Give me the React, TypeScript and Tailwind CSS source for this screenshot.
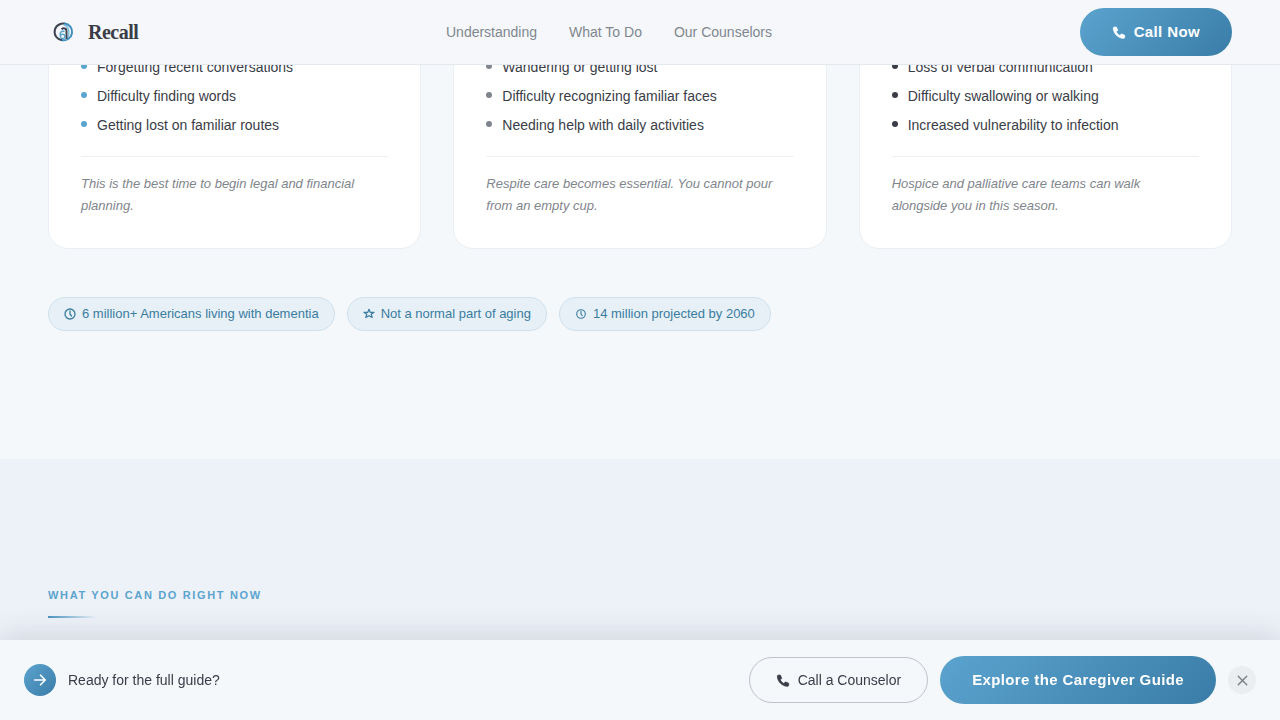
import { X } from "lucide-react";

const navLinks = [
  { label: "Understanding", href: "#understanding" },
  { label: "What To Do", href: "#what-to-do" },
  { label: "Our Counselors", href: "#counselors" },
];

const stages = [
  {
    id: "early",
    dot: "bg-[#5ba4cf]",
    signs: ["Forgetting recent conversations", "Difficulty finding words", "Getting lost on familiar routes"],
    note: "This is the best time to begin legal and financial planning.",
  },
  {
    id: "middle",
    dot: "bg-[#7f858c]",
    signs: ["Wandering or getting lost", "Difficulty recognizing familiar faces", "Needing help with daily activities"],
    note: "Respite care becomes essential. You cannot pour from an empty cup.",
  },
  {
    id: "late",
    dot: "bg-[#3a3d47]",
    signs: ["Loss of verbal communication", "Difficulty swallowing or walking", "Increased vulnerability to infection"],
    note: "Hospice and palliative care teams can walk alongside you in this season.",
  },
];

const Logo = () => (
  <svg width="32" height="32" viewBox="0 0 32 32" fill="none" aria-hidden="true">
    <path d="M14.500 24.200A8.300 8.300 0 1 1 19 8.700" stroke="#3d4350" strokeWidth="2" />
    <path d="M16.500 7.400A8.500 8.500 0 1 1 14 24.200" stroke="#3f8fbe" strokeWidth="2" />
    <path d="M15.500 8.500C21.500 10.500 23 19.500 17.500 23.800" stroke="#7dbbdc" strokeWidth="1.400" />
    <path d="M13.500 13.200c2-1.500 5-1 5 1.500v8.300" stroke="#3d4350" strokeWidth="2" />
    <path d="M16.500 15.500c-3.500-.7-4.500 1-4.300 4 .2 2.400 1.500 3.300 3.300 2.900 1.600-.4 1.800-2.700.5-3.700-1.200-.7-2.500-.4-3.500.5" stroke="#5ba4cf" strokeWidth="1.500" />
  </svg>
);

const PhoneIcon = () => (
  <svg width="14" height="14" viewBox="1 0 22 22" fill="currentColor" stroke="currentColor" strokeWidth="1" strokeLinejoin="round" aria-hidden="true">
    <path d="M4 3.500L6.800 3c.6-.1 1.100.2 1.300.7l1.800 4c.2.500.1 1-.3 1.400L7.600 10.800c1.300 2.500 3.200 4.400 5.700 5.700l1.800-2c.3-.4.900-.5 1.400-.3l4 1.700c.5.200.8.8.7 1.300l-.6 2.800c-.1.600-.6 1-1.200 1C10.700 21 3 13.300 3 4.700c0-.600.400-1.100 1-1.200z" />
  </svg>
);

const ClockIcon = ({ small = false }: { small?: boolean }) => (
  <svg
    width="12"
    height="12"
    viewBox={small ? "-1 -1 14 14" : "0 0 12 12"}
    fill="none"
    stroke="currentColor"
    strokeWidth="1.300"
    strokeLinecap="round"
    aria-hidden="true"
  >
    <circle cx="6" cy="6" r="5" />
    <path d="M6 3v3l1.500 2" />
  </svg>
);

const StarIcon = () => (
  <svg width="12" height="12" viewBox="0 0 12 12" fill="none" stroke="currentColor" strokeWidth="1.200" strokeLinejoin="round" aria-hidden="true">
    <path d="M6 1.300l1.200 3h3.900L8.200 6.300l1 3.200L6 7.700 2.800 9.500l1-3.200L.9 4.300h3.900L6 1.300z" />
  </svg>
);

const facts = [
  { icon: <ClockIcon />, text: "6 million+ Americans living with dementia" },
  { icon: <StarIcon />, text: "Not a normal part of aging" },
  { icon: <ClockIcon small />, text: "14 million projected by 2060" },
];

const Header = () => (
  <header className="fixed inset-x-0 top-0 z-20 border-b border-[#e3e8ee] bg-[#f5f7fb]">
    <div className="flex h-16 items-center justify-between px-12">
      <a href="#top" className="flex items-center gap-2">
        <Logo />
        <span className="font-['Liberation_Serif',serif] text-xl font-bold tracking-tight">Recall</span>
      </a>
      <nav className="flex gap-8 text-sm text-[#7f888f]">
        {navLinks.map((link) => (
          <a key={link.href} href={link.href}>
            {link.label}
          </a>
        ))}
      </nav>
      <a
        href="#call"
        className="flex h-12 items-center gap-2 rounded-full bg-linear-135 from-[#5ba4cf] to-[#3a7ca8] px-8 text-[15px] font-bold tracking-wide text-white"
      >
        <PhoneIcon />
        Call Now
      </a>
    </div>
  </header>
);

const StickyBar = () => (
  <aside className="fixed inset-x-0 bottom-0 z-20 flex h-20 items-center justify-between bg-[#f4f8fb] px-6 shadow-[0_-4px_30px_rgba(45,49,66,0.15)]">
    <div className="flex items-center gap-3">
      <span className="flex size-8 items-center justify-center rounded-full bg-linear-135 from-[#5ba4cf] to-[#3a7ca8] text-white">
        <svg width="14" height="14" viewBox="0 0 14 14" fill="none" stroke="currentColor" strokeWidth="1.600" strokeLinecap="round" strokeLinejoin="round" aria-hidden="true">
          <path d="M1.700 7h10.600M7.500 2.200L12.300 7l-4.800 4.800" />
        </svg>
      </span>
      <p className="text-sm">Ready for the full guide?</p>
    </div>
    <div className="flex items-center gap-3">
      <a href="#call" className="flex h-[46px] items-center gap-2 rounded-full border border-[#bfc3ca] px-[26px] text-sm">
        <PhoneIcon />
        Call a Counselor
      </a>
      <a
        href="#guide"
        className="flex h-12 items-center rounded-full bg-linear-135 from-[#5ba4cf] to-[#3a7ca8] px-8 text-[15px] font-bold tracking-wide text-white"
      >
        Explore the Caregiver Guide
      </a>
      <button type="button" aria-label="Dismiss" className="flex size-7 items-center justify-center rounded-full bg-[#eaeef1] text-[#7d8288]">
        <X size={17} strokeWidth={2} />
      </button>
    </div>
  </aside>
);

const App = () => {
  return (
    <div id="top" className="flex min-h-screen flex-col bg-[#f4f8fb] font-['Liberation_Sans',Arial,sans-serif] text-[#3a3d47]">
      <Header />

      <main className="flex flex-1 flex-col">
        <section id="understanding" className="px-12 pb-32">
          <div className="grid grid-cols-3 gap-8">
            {stages.map((stage) => (
              <article key={stage.id} className="rounded-[20px] border border-[#e9eff4] bg-white px-8 pt-14 pb-[31px]">
                <ul className="flex flex-col gap-2 text-sm leading-[21px]">
                  {stage.signs.map((sign) => (
                    <li key={sign} className="flex items-start gap-2.5">
                      <span className={`mt-1.5 size-1.5 shrink-0 rounded-full ${stage.dot}`} />
                      {sign}
                    </li>
                  ))}
                </ul>
                <p className="mt-5 border-t border-[#eef0f3] pt-4 text-[13px] leading-[22px] text-[#7f858c] italic">{stage.note}</p>
              </article>
            ))}
          </div>

          <ul className="mt-12 flex flex-wrap gap-3">
            {facts.map((fact) => (
              <li
                key={fact.text}
                className="flex items-center gap-1.5 rounded-full border border-[#cfe1ed] bg-[#e7f0f7] px-[15px] py-2 text-[13px] leading-4 text-[#3a7ca0]"
              >
                {fact.icon}
                {fact.text}
              </li>
            ))}
          </ul>
        </section>

        <section id="what-to-do" className="flex-1 bg-[#edf1f8] px-12 pt-32">
          <h2 className="text-[11px] leading-4 font-bold tracking-[0.15em] text-[#5ba4cf] uppercase">What you can do right now</h2>
          <div className="mt-[13px] h-0.5 w-12 bg-linear-to-r from-[#4a95c0] to-transparent" />
        </section>
      </main>

      <StickyBar />
    </div>
  );
};

export default App;
